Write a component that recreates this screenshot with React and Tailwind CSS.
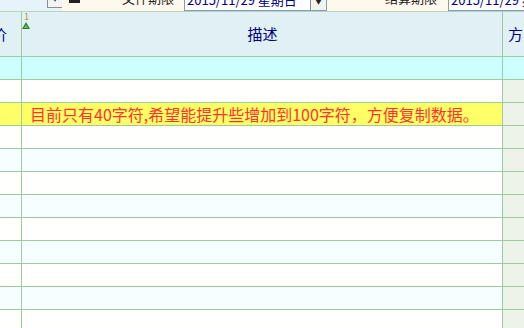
import React from 'react';

const rows = Array.from({ length: 12 }, (_, i) => i);

function rowBg(i) {
  if (i === 0) return 'bg-[#ccffff]';
  if (i === 2) return 'bg-[#ffff66]';
  return i % 2 === 0 ? 'bg-[#f5ffff]' : 'bg-[#fffffe]';
}

function Toolbar() {
  return (
    <div className="flex h-[12px] border-b border-[#b9d3b9] overflow-hidden text-[13px] leading-none">
      {/* left blue part with the clipped dropdown button */}
      <div className="w-[62px] bg-[#e6f3fb] relative shrink-0">
        <div className="absolute left-[47px] top-[-10px] w-[16px] h-[18px] bg-[#f3f3f3] border border-[#8c8c8c] flex items-end justify-center pb-[5px]">
          <span className="text-[7px] text-[#222]">▼</span>
        </div>
      </div>
      <div className="flex-1 bg-[#fff8ec] relative">
        {/* clipped icon */}
        <div className="absolute left-[7px] top-[-8px] w-[11px] h-[11px] border-b-[3px] border-l-[2px] border-[#222]" />
        <span className="absolute left-[60px] top-[-9px] text-[#222] whitespace-nowrap">文件期限</span>
        <div className="absolute left-[122px] top-[-10px] w-[143px] h-[21px] bg-white border border-[#7f9db9] flex items-end">
          <span className="pl-[2px] pb-[4px] text-[#000080] whitespace-nowrap">2015/11/29 星期日</span>
          <div className="ml-auto w-[16px] h-[19px] bg-[#f3f3f3] border-l border-[#8c8c8c] flex items-end justify-center pb-[5px]">
            <span className="text-[7px] text-[#222]">▼</span>
          </div>
        </div>
        <span className="absolute left-[323px] top-[-9px] text-[#222] whitespace-nowrap">结算期限</span>
        <div className="absolute left-[386px] top-[-10px] w-[143px] h-[21px] bg-white border border-[#7f9db9] flex items-end">
          <span className="pl-[2px] pb-[4px] text-[#000080] whitespace-nowrap">2015/11/29 星期日</span>
        </div>
      </div>
    </div>
  );
}

export default function App() {
  return (
    <div
      className="w-[524px] h-[328px] overflow-hidden bg-white"
      style={{ fontFamily: '"Noto Sans CJK SC", "Liberation Sans", sans-serif' }}
    >
      <Toolbar />

      {/* header */}
      <div className="flex h-[45px] border-b border-[#9fc99f] bg-[#e1f0f4] text-[15px] text-[#000080]">
        <div className="w-[22px] shrink-0 border-r border-[#9fc99f] overflow-hidden flex items-center justify-end">
          <span className="mr-[14px] whitespace-nowrap">单价</span>
        </div>
        <div className="w-[481px] shrink-0 border-r border-[#9fc99f] relative flex items-center justify-center">
          <span className="absolute left-[2px] top-[0px] text-[9px] leading-none text-[#b09a2a]">1</span>
          <svg className="absolute left-[0px] top-[10px]" width="8" height="7" viewBox="0 0 8 7">
            <polygon points="4,0 8,7 0,7" fill="#2f7d2f" />
            <polygon points="4,2.5 6.2,6 1.8,6" fill="#7ab84a" />
          </svg>
          <span className="ml-[1px]">描述</span>
        </div>
        <div className="flex-1 flex items-center pl-[5px] overflow-hidden whitespace-nowrap">方向</div>
      </div>

      {/* rows */}
      {rows.map((i) => (
        <div key={i} className={`flex h-[23px] border-b border-[#9fc99f] ${rowBg(i)}`}>
          <div className="w-[22px] shrink-0 border-r border-[#9fc99f]" />
          <div className="w-[481px] shrink-0 border-r border-[#9fc99f] flex items-center pl-[8px] overflow-hidden">
            {i === 2 && (
              <span className="text-[16px] leading-none text-[#ff3333] whitespace-nowrap">
                目前只有40字符,希望能提升些增加到100字符，方便复制数据。
              </span>
            )}
          </div>
          <div className={`flex-1 ${i === 0 ? 'bg-[#ccffff]' : 'bg-[#edf3e8]'}`} />
        </div>
      ))}
    </div>
  );
}
